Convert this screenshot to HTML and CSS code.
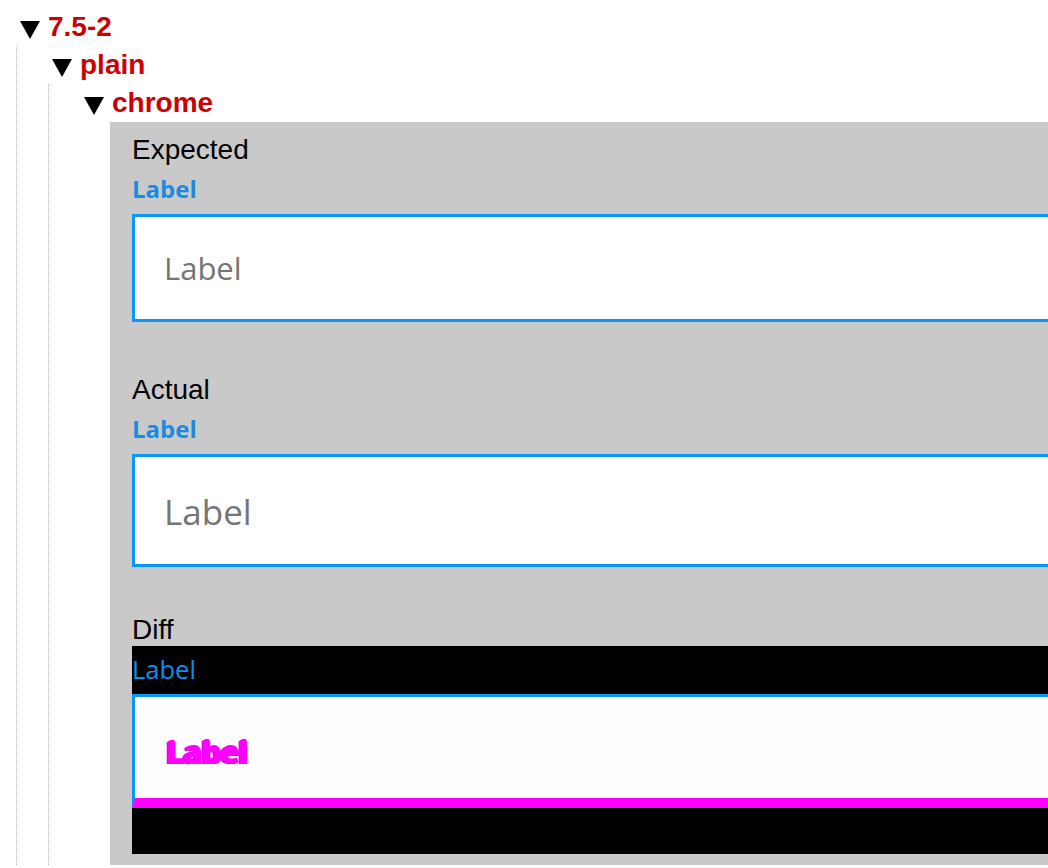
FILE: index.html
```html
<!DOCTYPE html>
<html>
<head>
<meta charset="utf-8">
<link rel="stylesheet" href="styles.css">
</head>
<body>
<div class="tree">
  <div class="node">
    <div class="row"><svg class="tri" width="20" height="18" viewBox="0 0 20 18"><polygon points="0,0 20,0 10,18" fill="#000"/></svg><span class="name">7.5-2</span></div>
    <div class="children">
      <div class="node">
        <div class="row"><svg class="tri" width="20" height="18" viewBox="0 0 20 18"><polygon points="0,0 20,0 10,18" fill="#000"/></svg><span class="name">plain</span></div>
        <div class="children">
          <div class="node">
            <div class="row"><svg class="tri" width="20" height="18" viewBox="0 0 20 18"><polygon points="0,0 20,0 10,18" fill="#000"/></svg><span class="name">chrome</span></div>
            <div class="children leaf">
              <div class="result">
                <section class="shot">
                  <h3 class="shot-title">Expected</h3>
                  <div class="image">
                    <div class="field-label">Label</div>
                    <div class="field field-expected"><span class="placeholder">Label</span></div>
                  </div>
                </section>
                <section class="shot">
                  <h3 class="shot-title">Actual</h3>
                  <div class="image">
                    <div class="field-label">Label</div>
                    <div class="field field-actual"><span class="placeholder placeholder-lg">Label</span></div>
                  </div>
                </section>
                <section class="shot">
                  <h3 class="shot-title">Diff</h3>
                  <div class="image image-diff">
                    <div class="field-label field-label-diff">Label</div>
                    <div class="field field-diff">
                      <span class="diff-text">Label</span>
                    </div>
                  </div>
                </section>
              </div>
            </div>
          </div>
        </div>
      </div>
    </div>
  </div>
</div>
</body>
</html>
```
FILE: styles.css
```css
html {
  overflow: hidden;
}
body {
  margin: 8px 0 0 8px;
  background: #ffffff;
  font-family: "Liberation Sans", Arial, sans-serif;
}
.node {
  padding-left: 12px;
}
.children .node {
  padding-left: 0;
}
.row {
  display: flex;
  align-items: flex-start;
  height: 38px;
}
.tri {
  display: block;
  margin-top: 13px;
  margin-right: 8px;
  flex: none;
}
.name {
  font-weight: bold;
  font-size: 28px;
  line-height: 38px;
  color: #cc0000;
}
.children {
  margin-left: -4px;
  border-left: 1px dotted #b4b4b4;
  padding-left: 35px;
}
.children.leaf {
  margin-left: 0;
  border-left: none;
  padding-left: 26px;
}
.result {
  background: #c9c9c9;
  padding: 12px 0 11px 22px;
}
.shot-title {
  margin: 0;
  font-weight: normal;
  font-size: 28px;
  line-height: 32px;
  height: 32px;
  color: #000;
}
.image {
  height: 208px;
  padding-top: 8px;
  box-sizing: border-box;
}
.image-diff {
  background: #000;
}
.field-label {
  font-family: "Open Sans", sans-serif;
  font-weight: 700;
  font-size: 24px;
  line-height: 30px;
  height: 30px;
  color: #1b8be2;
  margin-bottom: 10px;
}
.field-label-diff {
  font-weight: 400;
  font-size: 25.5px;
  color: #0a90ec;
}
.field {
  box-sizing: border-box;
  background: #fff;
  border: 3px solid #0896fb;
  border-right: none;
  display: flex;
  align-items: center;
  padding-left: 29px;
}
.field-expected {
  height: 108px;
}
.field-actual {
  height: 113px;
}
.placeholder {
  font-family: "Open Sans", sans-serif;
  font-size: 31px;
  color: #757575;
}
.placeholder-lg {
  font-size: 35px;
  padding-top: 2px;
}
.field-diff {
  height: 114px;
  border-bottom: 10px solid #ff00ff;
  background: #fffdff;
  padding-left: 30px;
  padding-top: 6px;
}
.diff-text {
  font-family: "Open Sans", sans-serif;
  font-weight: 700;
  font-size: 31px;
  line-height: 34px;
  color: #ff00ff;
  letter-spacing: -0.5px;
  text-shadow: 2px -1px 0 #ff00ff, 3px 1px 0 #ff00ff, -1px 1px 0 #e000e0;
}
```
